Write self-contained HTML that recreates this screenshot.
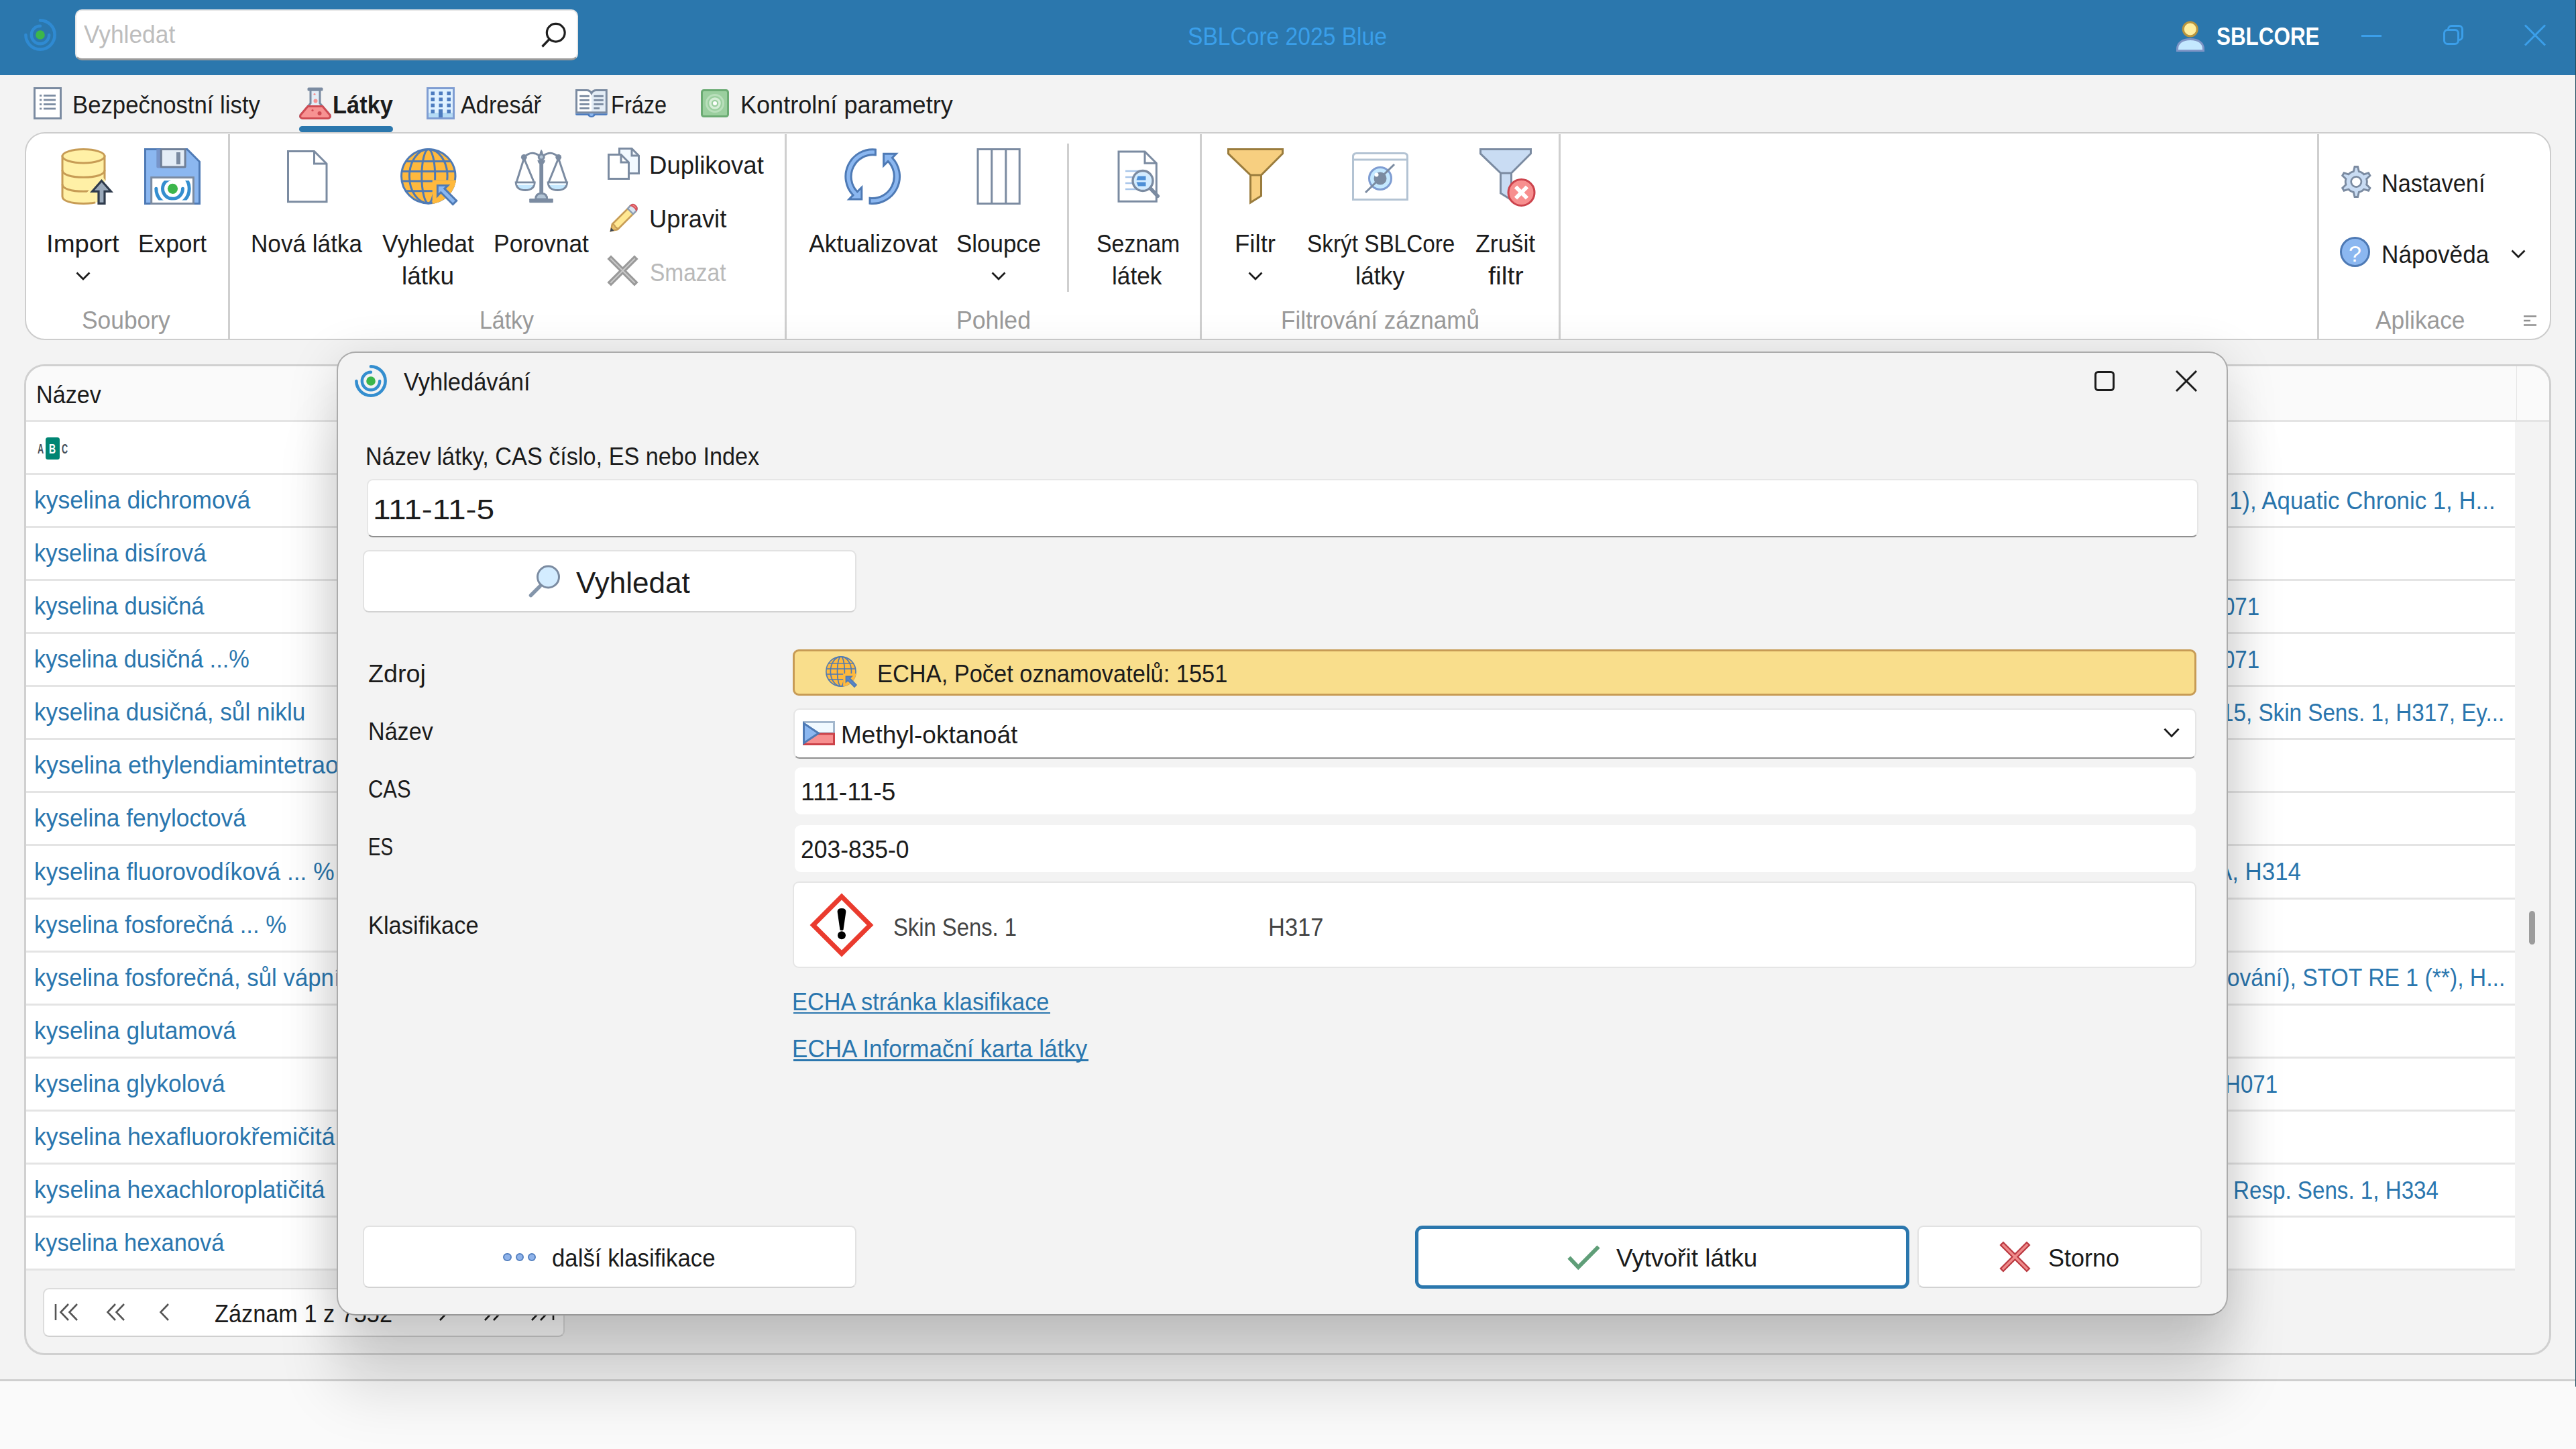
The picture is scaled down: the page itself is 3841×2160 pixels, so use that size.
<!DOCTYPE html><html lang="cs"><head><meta charset="utf-8"><title>SBLCore 2025 Blue</title><style>

html,body{margin:0;padding:0}
body{width:3841px;height:2160px;position:relative;overflow:hidden;background:#f3f3f3;font-family:"Liberation Sans", sans-serif;color:#1b1b1b}
div,svg,span{position:absolute;box-sizing:border-box}
svg{overflow:visible}
.t{white-space:nowrap;line-height:1;transform-origin:0 0}
.L{left:0;top:0;width:3841px;height:2160px}

.sep{background:#cfcfcf}
.row{background:#fff;border-bottom:3px solid #e4e4e4}
.btn{background:#fff;border:2.5px solid #e2e2e2;border-bottom-color:#d2d2d2;border-radius:9px}
.inp{background:#fff;border:2px solid #e6e6e6;border-bottom:2.6px solid #8f8f8f;border-radius:9px}
.ro{background:#fff;border-radius:9px}

</style></head><body>
<div class="L" id="bg">
<div style="left:0px;top:0px;width:3841px;height:112px;background:#2b77ad"></div>
<div style="left:0px;top:2056px;width:3841px;height:3px;background:#cfcfcf"></div>
<div style="left:0px;top:2059px;width:3841px;height:101px;background:#fafafa"></div>
<div style="left:3840px;top:0px;width:1px;height:2067px;background:#1d4a5c"></div>
<svg style="left:36px;top:27.5px" width="48" height="48" viewBox="0 0 48 48" ><path d="M24 2.4A21.6 21.6 0 1 1 2.4 24" fill="none" stroke="#2f8ad2" stroke-width="4.6" stroke-linecap="round"/><path d="M37.2 24A13.2 13.2 0 1 1 24 10.8" fill="none" stroke="#2f8ad2" stroke-width="4.4" stroke-linecap="round"/><circle cx="24" cy="24" r="6.8" fill="#3cb64b"/></svg>
<div style="left:112px;top:14px;width:750px;height:76px;background:#fff;border:2.5px solid #e6e6e6;border-bottom:3px solid #9a9a9a;border-radius:10px"></div>
<span class="t" style="left:125.00px;top:34px;font-size:36px;transform:scaleX(0.9819);color:#bdbdbd;">Vyhledat</span>
<svg style="left:800px;top:28px" width="48" height="48" viewBox="0 0 48 48" ><circle cx="28.75" cy="20.75" r="13.4" fill="none" stroke="#1f1f1f" stroke-width="3.2"/><path d="M19.3 30.3 L8.5 41.5" stroke="#1f1f1f" stroke-width="3.4" fill="none"/></svg>
<span class="t" style="left:1771.07px;top:37px;font-size:36px;transform:scaleX(0.9330);color:#3a9fea;">SBLCore 2025 Blue</span>
<svg style="left:3245px;top:30.5px" width="42" height="46" viewBox="0 0 42 46" ><path d="M1.5 44.5V42C1.5 33 9 27.5 21 27.5S40.5 33 40.5 42V44.5Z" fill="#c4e8ff" stroke="#7f95c6" stroke-width="3"/><circle cx="20.75" cy="12.5" r="10.5" fill="#ffee9f" stroke="#b8953f" stroke-width="3"/></svg>
<span class="t" style="left:3304.88px;top:37px;font-size:36px;transform:scaleX(0.8721);color:#fff;font-weight:700;">SBLCORE</span>
<div style="left:3521px;top:51.75px;width:30px;height:3px;background:#3b9fea"></div>
<svg style="left:3642px;top:36px" width="32" height="32" viewBox="0 0 32 32" ><rect x="8.5" y="2.5" width="21" height="21" rx="5" fill="none" stroke="#3b9fea" stroke-width="3"/><rect x="2.5" y="8.5" width="21" height="21" rx="5" fill="#2b77ad" stroke="#3b9fea" stroke-width="3"/></svg>
<svg style="left:3763px;top:36px" width="34" height="33" viewBox="0 0 34 33" ><path d="M2 1.5 L32 31.5 M32 1.5 L2 31.5" stroke="#3b9fea" stroke-width="3" fill="none"/></svg>
</div>
<div class="L" id="main">
<svg style="left:50px;top:130px" width="42" height="48" viewBox="0 0 42 48" ><rect x="1.5" y="1.5" width="39" height="45" fill="#fff" stroke="#7b8ba1" stroke-width="3"/><rect x="9" y="11.1" width="3.2" height="2.8" fill="#7b8ba1"/><rect x="15" y="11.1" width="18" height="2.8" fill="#7b8ba1"/><rect x="9" y="17.6" width="3.2" height="2.8" fill="#7b8ba1"/><rect x="15" y="17.6" width="18" height="2.8" fill="#7b8ba1"/><rect x="9" y="24.1" width="3.2" height="2.8" fill="#7b8ba1"/><rect x="15" y="24.1" width="18" height="2.8" fill="#7b8ba1"/><rect x="9" y="30.6" width="3.2" height="2.8" fill="#7b8ba1"/><rect x="15" y="30.6" width="18" height="2.8" fill="#7b8ba1"/></svg>
<span class="t" style="left:108.07px;top:139px;font-size:36px;transform:scaleX(0.9648);">Bezpečnostní listy</span>
<svg style="left:445.75px;top:130px" width="48" height="48" viewBox="0 0 48 48" ><path d="M17 4V24L2 41.5Q0.5 46 5.5 46.5H42.5Q47.5 46 46 41.5L31 24V4Z" fill="#e4edf6" stroke="#7b8ba1" stroke-width="3"/><path d="M13 28.5H35L46 41.5Q47.5 46 42.5 46.5H5.5Q0.5 46 2 41.5Z" fill="#f79292" stroke="#cf4a52" stroke-width="3"/><rect x="12.5" y="0.5" width="23" height="5" rx="1.5" fill="#7b8ba1"/><circle cx="23" cy="10.5" r="1.6" fill="#f79292"/><circle cx="24.5" cy="20.5" r="3" fill="#f79292"/><circle cx="20" cy="34.5" r="1.6" fill="#cf4a52"/><circle cx="30.5" cy="39" r="3" fill="#cf4a52"/></svg>
<span class="t" style="left:495.59px;top:139px;font-size:36px;transform:scaleX(0.9563);font-weight:700;">Látky</span>
<div style="left:446px;top:188px;width:140px;height:9px;background:#2b77ad;border-radius:5px"></div>
<svg style="left:636.25px;top:130px" width="42" height="48" viewBox="0 0 42 48" ><rect x="1.5" y="1.5" width="39" height="45" fill="#dff1ff" stroke="#7f9dd2" stroke-width="3"/><rect x="3" y="38" width="36" height="7" fill="#b5dbf5"/><rect x="6.5" y="6.5" width="5.5" height="5.5" fill="#4d7cbf"/><rect x="18.5" y="6.5" width="5.5" height="5.5" fill="#4d7cbf"/><rect x="30.5" y="6.5" width="5.5" height="5.5" fill="#4d7cbf"/><rect x="6.5" y="15.5" width="5.5" height="5.5" fill="#4d7cbf"/><rect x="18.5" y="15.5" width="5.5" height="5.5" fill="#4d7cbf"/><rect x="30.5" y="15.5" width="5.5" height="5.5" fill="#4d7cbf"/><rect x="6.5" y="24.5" width="5.5" height="5.5" fill="#4d7cbf"/><rect x="18.5" y="24.5" width="5.5" height="5.5" fill="#4d7cbf"/><rect x="30.5" y="24.5" width="5.5" height="5.5" fill="#4d7cbf"/><rect x="6.5" y="33.5" width="5.5" height="5.5" fill="#4d7cbf"/><rect x="18.5" y="33.5" width="5.5" height="5.5" fill="#4d7cbf"/><rect x="30.5" y="33.5" width="5.5" height="5.5" fill="#4d7cbf"/><rect x="18" y="33" width="6" height="12" fill="#4d7cbf"/></svg>
<span class="t" style="left:687.00px;top:139px;font-size:36px;transform:scaleX(0.9523);">Adresář</span>
<svg style="left:858px;top:133px" width="48" height="42" viewBox="0 0 48 42" ><path d="M1.5 1.5H17Q21.5 1.5 23.9 6Q26.3 1.5 31 1.5H46.3V34.8H1.5Z" fill="#fff" stroke="none"/><path d="M23.9 6Q26.3 1.5 31 1.5H46.3V34.8H23.9Z" fill="#e4edf6"/><path d="M1.5 1.5H17Q21.5 1.5 23.9 6Q26.3 1.5 31 1.5H46.3V34.8H1.5Z" fill="none" stroke="#7b8ba1" stroke-width="3"/><path d="M0 36.3H47.8V37Q47.8 39 45.8 39H29.5Q27.5 42 23.9 42T18.3 39H2Q0 39 0 37Z" fill="#4d7cbf"/><path d="M20.9 36.3H26.9Q26.9 40 23.9 40T20.9 36.3Z" fill="#8bb7f0"/><rect x="6.2" y="8.850000000000001" width="14.6" height="2.9" fill="#7b8ba1"/><rect x="27.4" y="8.850000000000001" width="14.4" height="2.9" fill="#7b8ba1"/><rect x="6.2" y="14.95" width="14.6" height="2.9" fill="#7b8ba1"/><rect x="27.4" y="14.95" width="14.4" height="2.9" fill="#7b8ba1"/><rect x="6.2" y="20.95" width="14.6" height="2.9" fill="#7b8ba1"/><rect x="27.4" y="20.95" width="14.4" height="2.9" fill="#7b8ba1"/><rect x="6.2" y="27.05" width="14.6" height="2.9" fill="#7b8ba1"/><rect x="27.4" y="27.05" width="8.6" height="2.9" fill="#7b8ba1"/></svg>
<span class="t" style="left:910.69px;top:139px;font-size:36px;transform:scaleX(0.9045);">Fráze</span>
<svg style="left:1045px;top:133px" width="42" height="42" viewBox="0 0 42 42" ><rect x="1.5" y="1.5" width="39" height="39" rx="3" fill="#9bcf9f" stroke="#6bab73" stroke-width="3"/><circle cx="21" cy="21" r="12.5" fill="none" stroke="#b9dfbb" stroke-width="3"/><circle cx="21" cy="21" r="7" fill="none" stroke="#d5edd6" stroke-width="3.5"/><circle cx="21" cy="21" r="3" fill="#fff"/></svg>
<span class="t" style="left:1104.25px;top:139px;font-size:36px;transform:scaleX(1.0019);">Kontrolní parametry</span>
<div style="left:36.5px;top:197px;width:3767px;height:310px;background:#fff;border:2.6px solid #cdcdcd;border-radius:30px"></div>
<div class="sep" style="left:339.5px;top:200px;width:3px;height:304.5px;"></div>
<div class="sep" style="left:1170px;top:200px;width:3px;height:304.5px;"></div>
<div class="sep" style="left:1789px;top:200px;width:3px;height:304.5px;"></div>
<div class="sep" style="left:2324px;top:200px;width:3px;height:304.5px;"></div>
<div class="sep" style="left:3455px;top:200px;width:3px;height:304.5px;"></div>
<div class="sep" style="left:1590.75px;top:213.75px;width:3px;height:220.75px;"></div>
<svg style="left:90.5px;top:221px" width="88" height="86" viewBox="0 0 88 86" ><defs><clipPath id="cylc"><path d="M2 11.8V72C2 78.5 15 82.5 33.5 82.5S65 78.5 65 72V11.8Z"/><ellipse cx="33.5" cy="11.8" rx="31.5" ry="10.2"/></clipPath></defs><path d="M2 11.8V72C2 78.5 15 82.5 33.5 82.5S65 78.5 65 72V11.8Z" fill="#fff0a6" stroke="#c79c55" stroke-width="3"/><ellipse cx="33.5" cy="11.8" rx="31.5" ry="10.2" fill="#fff0a6" stroke="#c79c55" stroke-width="3"/><path d="M2 32.8C2 39.3 15 43.3 33.5 43.3S65 39.3 65 32.8M2 53.8C2 60.3 15 64.3 33.5 64.3S65 60.3 65 53.8" fill="none" stroke="#c79c55" stroke-width="3"/><path d="M60.5 48.5L74.5 64.3H65V82.3H56V64.3H46.5Z" fill="#fff" stroke="#fff" stroke-width="9"/><path d="M60.5 48.5L74.5 64.3H65V82.3H56V64.3H46.5Z" fill="#fff0a6" stroke="#fff0a6" stroke-width="9.5" clip-path="url(#cylc)"/><path d="M60.5 48.5L74.5 64.3H65V82.3H56V64.3H46.5Z" fill="#9aa9ba" stroke="#2f3b4c" stroke-width="3.2"/></svg>
<span class="t" style="left:68.80px;top:346px;font-size:36px;transform:scaleX(1.0654);">Import</span>
<svg style="left:113.2px;top:404.5px" width="22" height="14" viewBox="0 0 22 14" ><path d="M1.5 1.5 L11 11 L20.5 1.5" fill="none" stroke="#1b1b1b" stroke-width="2.8"/></svg>
<svg style="left:215px;top:221px" width="84" height="84" viewBox="0 0 84 84" ><defs><clipPath id="flc"><rect x="12" y="48.2" width="60" height="29.3"/></clipPath></defs><path d="M1.5 1.5H64L82.5 20V82.5H1.5Z" fill="#8bb7f0" stroke="#4e7ab5" stroke-width="3"/><path d="M18.3 1.5H25V29.5H21Q18.3 29.5 18.3 27Z" fill="#7794c9"/><rect x="25.3" y="1.5" width="35.8" height="26.5" rx="1" fill="#e4edf6" stroke="#6f7f97" stroke-width="3"/><rect x="48" y="6" width="6" height="18" fill="#7b8ba1"/><rect x="10.7" y="43.6" width="62.7" height="38.9" fill="#fff" stroke="#7b8ba1" stroke-width="3"/><g clip-path="url(#flc)"><path d="M42.5 35.6A24.7 24.7 0 1 1 17.8 60.3" fill="none" stroke="#348ecf" stroke-width="5" stroke-linecap="round"/><path d="M57.5 60.3A15 15 0 1 1 42.5 45.3" fill="none" stroke="#348ecf" stroke-width="5" stroke-linecap="round"/></g><circle cx="42.5" cy="60.3" r="7.6" fill="#3cb64b"/></svg>
<span class="t" style="left:205.54px;top:346px;font-size:36px;transform:scaleX(0.9800);">Export</span>
<span class="t" style="left:122.02px;top:460px;font-size:36px;transform:scaleX(0.9824);color:#9a9a9a;">Soubory</span>
<svg style="left:427.5px;top:223.75px" width="61" height="79" viewBox="0 0 61 79" ><path d="M1.5 1.5H40.5L59 20V76.8H1.5Z" fill="#fff" stroke="#7b8ba1" stroke-width="3"/><path d="M40.5 1.5V20H59" fill="none" stroke="#7b8ba1" stroke-width="3"/></svg>
<span class="t" style="left:373.55px;top:346px;font-size:36px;transform:scaleX(0.9760);">Nová látka</span>
<svg style="left:597px;top:221px" width="86.5" height="86.5" viewBox="0 0 87 87" ><defs><clipPath id="gc597"><circle cx="42" cy="42" r="42"/></clipPath></defs><circle cx="42" cy="42" r="40.5" fill="#ffb93d" stroke="#4e7ab5" stroke-width="3"/><ellipse cx="42" cy="42" rx="10" ry="40.5" fill="none" stroke="#4e7ab5" stroke-width="3"/><ellipse cx="42" cy="42" rx="28.5" ry="40.5" fill="none" stroke="#4e7ab5" stroke-width="3"/><path d="M8 19.7H76M2.5 34.8H81.5M2.5 49.4H81.5M8 64.2H76" fill="none" stroke="#4e7ab5" stroke-width="3"/><rect x="48" y="47.7" width="40" height="40" fill="#ffb93d" clip-path="url(#gc597)"/><path d="M55.7 55.7H71.2L66.2 60.7L84.2 78.7L78.7 84.2L60.7 66.2L55.7 71.2Z" fill="#8bb7f0" stroke="#4e7ab5" stroke-width="3" stroke-linejoin="miter"/></svg>
<span class="t" style="left:570.00px;top:346px;font-size:36px;transform:scaleX(0.9873);">Vyhledat</span>
<span class="t" style="left:598.95px;top:394px;font-size:36px;transform:scaleX(1.0275);">látku</span>
<svg style="left:768px;top:221px" width="79" height="82" viewBox="0 0 79 82" ><path d="M13.3 13.3Q24 2.5 36 10.8M42.4 10.8Q54.4 2.5 64.7 13.3" fill="none" stroke="#7b8ba1" stroke-width="3"/><path d="M39.2 2.5Q43.2 8.5 39.2 11Q35.2 8.5 39.2 2.5Z" fill="#7b8ba1" stroke="#7b8ba1" stroke-width="1"/><circle cx="39.2" cy="13.1" r="4" fill="#b3c5d6" stroke="#7b8ba1" stroke-width="3"/><circle cx="13.3" cy="13.3" r="4.4" fill="#7b8ba1"/><circle cx="64.7" cy="13.3" r="4.4" fill="#7b8ba1"/><path d="M33.3 17.8H45.1Q44.5 22 42.1 23.5V68H36.3V23.5Q33.9 22 33.3 17.8Z" fill="#7b8ba1"/><path d="M13.3 15L2 51M13.3 15L28.4 51M64.7 15L50 51M64.7 15L76.8 51" fill="none" stroke="#7b8ba1" stroke-width="3"/><path d="M1.2 51H29.2Q28.5 62.5 15.2 62.5T1.2 51ZM49.2 51H77.6Q76.9 62.5 63.4 62.5T49.2 51Z" fill="#c4e8ff" stroke="#7b8ba1" stroke-width="3"/><path d="M2.8 53.5H27.6M50.8 53.5H76" stroke="#fff" stroke-width="2" fill="none"/><path d="M30.7 76Q30.7 67.2 39.2 67.2T47.7 76Z" fill="#b3c5d6" stroke="#7b8ba1" stroke-width="3"/><rect x="21.2" y="75.1" width="35.6" height="6.1" rx="1.2" fill="#7b8ba1"/></svg>
<span class="t" style="left:735.53px;top:346px;font-size:36px;transform:scaleX(0.9853);">Porovnat</span>
<svg style="left:906px;top:220px" width="48" height="48" viewBox="0 0 48 48" ><path d="M17.5 1.5H36L46.5 12V38.5H17.5Z" fill="#f2f9ff" stroke="#7b8ba1" stroke-width="3"/><path d="M36 1.5V12H46.5" fill="none" stroke="#7b8ba1" stroke-width="3"/><path d="M1.5 10.5H20L31.5 22V46.5H1.5Z" fill="#fff" stroke="#7b8ba1" stroke-width="3"/><path d="M20 10.5V22H31.5" fill="none" stroke="#7b8ba1" stroke-width="3"/></svg>
<span class="t" style="left:967.97px;top:229px;font-size:36px;transform:scaleX(1.0161);">Duplikovat</span>
<svg style="left:908.75px;top:303px" width="43" height="43" viewBox="0 0 43 43" ><path d="M30 5L38 13L12 39L2 41L4 31Z" fill="#ffe893" stroke="#c79c55" stroke-width="2.6"/><path d="M27 8L35 16L40 11Q42 6 38 3.5Q35 0.5 31 3.5Z" fill="#d9e4f0" stroke="#8b9bb1" stroke-width="2.4"/><path d="M31.5 3.2Q35 0.3 38.3 3.4Q42 6.5 39.8 10.5Q38 6 31.5 3.2Z" fill="#f78f8f" stroke="#d8525a" stroke-width="2"/><path d="M4 31Q8 32 8.5 35.5Q11 36 12 39L2 41Z" fill="#e8c06b" stroke="#c79c55" stroke-width="2"/><path d="M0.5 42.5L2.2 36.5L6.5 40.8Z" fill="#3a4656"/></svg>
<span class="t" style="left:968.48px;top:309px;font-size:36px;transform:scaleX(1.0109);">Upravit</span>
<svg style="left:906px;top:380.5px" width="45" height="45" viewBox="0 0 45 45" ><path d="M5 1.5L22.5 19L40 1.5L43.5 5L26 22.5L43.5 40L40 43.5L22.5 26L5 43.5L1.5 40L19 22.5L1.5 5Z" fill="#c9c9c9" stroke="#9a9a9a" stroke-width="3"/></svg>
<span class="t" style="left:969.07px;top:389px;font-size:36px;transform:scaleX(0.9294);color:#b9b9b9;">Smazat</span>
<span class="t" style="left:715.12px;top:460px;font-size:36px;transform:scaleX(0.9400);color:#9a9a9a;">Látky</span>
<svg style="left:1258.75px;top:221px" width="85" height="85" viewBox="0 0 85 85" ><path d="M46.4 2A40.3 40.3 0 0 0 13 69.9L7.1 76H25.8V58.3L19.3 64.8A32.5 32.5 0 0 1 46.4 9.9Z" fill="#8bb7f0" stroke="#4e7ab5" stroke-width="3" stroke-linejoin="miter"/><path d="M46.4 2A40.3 40.3 0 0 0 13 69.9L7.1 76H25.8V58.3L19.3 64.8A32.5 32.5 0 0 1 46.4 9.9Z" fill="#8bb7f0" stroke="#4e7ab5" stroke-width="3" stroke-linejoin="miter" transform="rotate(180 42.2 42.1)"/></svg>
<span class="t" style="left:1205.50px;top:346px;font-size:36px;transform:scaleX(0.9892);">Aktualizovat</span>
<svg style="left:1455.75px;top:221px" width="67" height="84" viewBox="0 0 67 84" ><rect x="2" y="1.5" width="62.2" height="81" fill="#fff" stroke="#7b8ba1" stroke-width="3"/><path d="M22.7 1.5V82.5M43.8 1.5V82.5" stroke="#7b8ba1" stroke-width="3" fill="none"/></svg>
<span class="t" style="left:1426.03px;top:346px;font-size:36px;transform:scaleX(0.9701);">Sloupce</span>
<svg style="left:1477.9px;top:404.5px" width="22" height="14" viewBox="0 0 22 14" ><path d="M1.5 1.5 L11 11 L20.5 1.5" fill="none" stroke="#1b1b1b" stroke-width="2.8"/></svg>
<svg style="left:1665.75px;top:223.75px" width="66" height="80" viewBox="0 0 66 80" ><path d="M2 2H41L58.3 19.3V76.3H2Z" fill="#fff" stroke="#7b8ba1" stroke-width="3"/><path d="M41 2V19.3H58.3" fill="none" stroke="#7b8ba1" stroke-width="3"/><path d="M12 31H36M12 40H30M12 49H30M12 58H36" stroke="#a9c6ea" stroke-width="2.6" fill="none"/><circle cx="38" cy="45.5" r="15" fill="#d3ecff" stroke="#7b8ba1" stroke-width="3.4"/><path d="M30.5 38.5H42.5V44.5H28.5ZM28.5 47.5H42.5V53.5H31Z" fill="#4d8fd6"/><path d="M49.5 57L60.3 68.3" stroke="#7b8ba1" stroke-width="5.5" stroke-linecap="round" fill="none"/></svg>
<span class="t" style="left:1634.56px;top:346px;font-size:36px;transform:scaleX(0.9413);">Seznam</span>
<span class="t" style="left:1657.54px;top:394px;font-size:36px;transform:scaleX(0.9794);">látek</span>
<span class="t" style="left:1425.52px;top:460px;font-size:36px;transform:scaleX(0.9901);color:#9a9a9a;">Pohled</span>
<svg style="left:1830px;top:221px" width="86" height="86" viewBox="0 0 86 86" ><path d="M1.5 1.5H82.5V8L50.5 40V71L34.5 81V40L1.5 8Z" fill="#f7cf80" stroke="#9a7c3d" stroke-width="3"/><path d="M34.5 40H50.5" stroke="#9a7c3d" stroke-width="3" fill="none"/></svg>
<span class="t" style="left:1840.97px;top:346px;font-size:36px;transform:scaleX(1.0174);">Filtr</span>
<svg style="left:1861.2px;top:404.5px" width="22" height="14" viewBox="0 0 22 14" ><path d="M1.5 1.5 L11 11 L20.5 1.5" fill="none" stroke="#1b1b1b" stroke-width="2.8"/></svg>
<svg style="left:2016.25px;top:227px" width="84" height="73" viewBox="0 0 84 73" ><path d="M1.5 70.5V6.5Q1.5 1.5 6.5 1.5H77.5Q82.5 1.5 82.5 6.5V70.5Z" fill="#fff" stroke="#b3c3d3" stroke-width="3"/><path d="M1.5 11H82.5" stroke="#b3c3d3" stroke-width="3" fill="none"/><circle cx="42" cy="39" r="16.5" fill="#c4e8ff" stroke="#7f9dd2" stroke-width="3"/><circle cx="42" cy="39" r="9.5" fill="#7b8ba1"/><circle cx="36.5" cy="33.5" r="3" fill="#fff"/><path d="M20 60L63 18" stroke="#7b8ba1" stroke-width="3" fill="none"/></svg>
<span class="t" style="left:1948.57px;top:346px;font-size:36px;transform:scaleX(0.9256);">Skrýt SBLCore</span>
<span class="t" style="left:2020.52px;top:394px;font-size:36px;transform:scaleX(0.9893);">látky</span>
<svg style="left:2205.75px;top:221px" width="86" height="88" viewBox="0 0 86 88" ><path d="M1.5 1.5H76.5V8L47.5 37V77L31.5 67V37L1.5 8Z" fill="#c9dcf3" stroke="#7b8ba1" stroke-width="3"/><path d="M31.5 37H47.5" stroke="#7b8ba1" stroke-width="3" fill="none"/><circle cx="62.5" cy="66" r="19.5" fill="#f78f8f" stroke="#cc434c" stroke-width="3"/><path d="M54 57.5L71 74.5M71 57.5L54 74.5" stroke="#fff" stroke-width="6" fill="none"/></svg>
<span class="t" style="left:2199.51px;top:346px;font-size:36px;transform:scaleX(0.9916);">Zrušit</span>
<span class="t" style="left:2219.25px;top:394px;font-size:36px;transform:scaleX(1.0990);">filtr</span>
<span class="t" style="left:1909.80px;top:460px;font-size:36px;transform:scaleX(0.9730);color:#9a9a9a;">Filtrování záznamů</span>
<svg style="left:3490px;top:247px" width="47" height="48" viewBox="0 0 47 48" ><path d="M21.0 1.5L25.6 1.5L27.3 8.5L28.9 9.0L30.5 9.7L32.0 10.6L33.5 11.6L34.7 12.8L41.6 10.8L43.9 14.7L38.7 19.7L39.1 21.4L39.3 23.1L39.3 24.9L39.1 26.6L38.7 28.3L43.9 33.3L41.6 37.2L34.7 35.2L33.5 36.4L32.0 37.4L30.5 38.3L28.9 39.0L27.3 39.5L25.6 46.5L21.0 46.5L19.3 39.5L17.7 39.0L16.1 38.3L14.6 37.4L13.1 36.4L11.9 35.2L5.0 37.2L2.7 33.3L7.9 28.3L7.5 26.6L7.3 24.9L7.3 23.1L7.5 21.4L7.9 19.7L2.7 14.7L5.0 10.8L11.9 12.8L13.1 11.6L14.6 10.6L16.1 9.7L17.7 9.0L19.3 8.5Z" fill="#c9dcf3" stroke="#7b8ba1" stroke-width="2.9" stroke-linejoin="miter"/><circle cx="23.3" cy="24" r="7.6" fill="#fff" stroke="#7b8ba1" stroke-width="2.7"/></svg>
<span class="t" style="left:3551.34px;top:256px;font-size:36px;transform:scaleX(0.9526);">Nastavení</span>
<div style="left:3489px;top:353px;width:45px;height:45px;border-radius:50%;background:#8bb7f0;border:3px solid #4e7ab5"></div>
<span class="t" style="left:3502.00px;top:361px;font-size:34px;transform:scaleX(1.0000);color:#fff;">?</span>
<span class="t" style="left:3551.30px;top:362px;font-size:36px;transform:scaleX(0.9764);">Nápověda</span>
<svg style="left:3744px;top:372.4px" width="22" height="14" viewBox="0 0 22 14" ><path d="M1.5 1.5 L11 11 L20.5 1.5" fill="none" stroke="#1b1b1b" stroke-width="2.8"/></svg>
<span class="t" style="left:3541.50px;top:460px;font-size:36px;transform:scaleX(0.9811);color:#9a9a9a;">Aplikace</span>
<svg style="left:3762.5px;top:469.5px" width="19" height="16" viewBox="0 0 19 16" ><path d="M0 1.5H19M0 8H10M0 14.5H19" stroke="#8f8f8f" stroke-width="2.6" fill="none"/></svg>
<div style="left:36px;top:542.8px;width:3768px;height:1477.5px;background:#f3f3f3;border:3px solid #d0d0d0;border-radius:30px;overflow:hidden">
<div style="left:0px;top:0.7px;width:3762px;height:80px;background:#fafafa"></div>
<div style="left:0px;top:80.2px;width:3762px;height:3px;background:#e4e4e4"></div>
<div style="left:3712.5px;top:0.7px;width:1.5px;height:80px;background:#e4e4e4"></div>
<div style="left:0px;top:83.2px;width:3711px;height:76px;background:#fff"></div>
<div style="left:0px;top:159.2px;width:3711px;height:3px;background:#e4e4e4"></div>
<div style="left:0px;top:162.2px;width:3711px;height:76.0667px;background:#fff"></div>
<div style="left:0px;top:238.267px;width:3711px;height:3px;background:#e4e4e4"></div>
<div style="left:0px;top:241.267px;width:3711px;height:76.0667px;background:#fff"></div>
<div style="left:0px;top:317.333px;width:3711px;height:3px;background:#e4e4e4"></div>
<div style="left:0px;top:320.333px;width:3711px;height:76.0667px;background:#fff"></div>
<div style="left:0px;top:396.4px;width:3711px;height:3px;background:#e4e4e4"></div>
<div style="left:0px;top:399.4px;width:3711px;height:76.0667px;background:#fff"></div>
<div style="left:0px;top:475.467px;width:3711px;height:3px;background:#e4e4e4"></div>
<div style="left:0px;top:478.467px;width:3711px;height:76.0667px;background:#fff"></div>
<div style="left:0px;top:554.533px;width:3711px;height:3px;background:#e4e4e4"></div>
<div style="left:0px;top:557.533px;width:3711px;height:76.0667px;background:#fff"></div>
<div style="left:0px;top:633.6px;width:3711px;height:3px;background:#e4e4e4"></div>
<div style="left:0px;top:636.6px;width:3711px;height:76.0667px;background:#fff"></div>
<div style="left:0px;top:712.667px;width:3711px;height:3px;background:#e4e4e4"></div>
<div style="left:0px;top:715.667px;width:3711px;height:76.0667px;background:#fff"></div>
<div style="left:0px;top:791.733px;width:3711px;height:3px;background:#e4e4e4"></div>
<div style="left:0px;top:794.733px;width:3711px;height:76.0667px;background:#fff"></div>
<div style="left:0px;top:870.8px;width:3711px;height:3px;background:#e4e4e4"></div>
<div style="left:0px;top:873.8px;width:3711px;height:76.0667px;background:#fff"></div>
<div style="left:0px;top:949.867px;width:3711px;height:3px;background:#e4e4e4"></div>
<div style="left:0px;top:952.867px;width:3711px;height:76.0667px;background:#fff"></div>
<div style="left:0px;top:1028.93px;width:3711px;height:3px;background:#e4e4e4"></div>
<div style="left:0px;top:1031.93px;width:3711px;height:76.0667px;background:#fff"></div>
<div style="left:0px;top:1108px;width:3711px;height:3px;background:#e4e4e4"></div>
<div style="left:0px;top:1111px;width:3711px;height:76.0667px;background:#fff"></div>
<div style="left:0px;top:1187.07px;width:3711px;height:3px;background:#e4e4e4"></div>
<div style="left:0px;top:1190.07px;width:3711px;height:76.0667px;background:#fff"></div>
<div style="left:0px;top:1266.13px;width:3711px;height:3px;background:#e4e4e4"></div>
<div style="left:0px;top:1269.13px;width:3711px;height:76.0667px;background:#fff"></div>
<div style="left:0px;top:1345.2px;width:3711px;height:3px;background:#e4e4e4"></div>
<div style="left:3732px;top:812.2px;width:9px;height:50px;background:#9c9c9c;border-radius:5px"></div>
</div>
<span class="t" style="left:54.35px;top:571px;font-size:36px;transform:scaleX(0.9496);">Název</span>
<div style="left:68px;top:652px;width:21.1px;height:33px;border-radius:3.5px;background:#008573"></div>
<span class="t" style="left:56.00px;top:658px;font-size:21px;transform:scaleX(0.6067);color:#454f59;font-weight:700;">A</span>
<span class="t" style="left:73.14px;top:658px;font-size:21px;transform:scaleX(0.6643);color:#fff;font-weight:700;">B</span>
<span class="t" style="left:92.00px;top:658px;font-size:21px;transform:scaleX(0.6000);color:#454f59;font-weight:700;">C</span>
<span class="t" style="left:50.52px;top:728px;font-size:36px;transform:scaleX(0.9881);color:#2a76ae;">kyselina dichromová</span>
<span class="t" style="left:50.57px;top:807px;font-size:36px;transform:scaleX(0.9638);color:#2a76ae;">kyselina disírová</span>
<span class="t" style="left:50.58px;top:886px;font-size:36px;transform:scaleX(0.9600);color:#2a76ae;">kyselina dusičná</span>
<span class="t" style="left:50.59px;top:965px;font-size:36px;transform:scaleX(0.9542);color:#2a76ae;">kyselina dusičná ...%</span>
<span class="t" style="left:50.55px;top:1044px;font-size:36px;transform:scaleX(0.9759);color:#2a76ae;">kyselina dusičná, sůl niklu</span>
<span class="t" style="left:50.50px;top:1123px;font-size:36px;transform:scaleX(0.9995);color:#2a76ae;">kyselina ethylendiamintetraoctová</span>
<span class="t" style="left:50.54px;top:1202px;font-size:36px;transform:scaleX(0.9802);color:#2a76ae;">kyselina fenyloctová</span>
<span class="t" style="left:50.54px;top:1282px;font-size:36px;transform:scaleX(0.9812);color:#2a76ae;">kyselina fluorovodíková ... %</span>
<span class="t" style="left:50.57px;top:1361px;font-size:36px;transform:scaleX(0.9639);color:#2a76ae;">kyselina fosforečná ... %</span>
<span class="t" style="left:50.57px;top:1440px;font-size:36px;transform:scaleX(0.9669);color:#2a76ae;">kyselina fosforečná, sůl vápníku</span>
<span class="t" style="left:50.53px;top:1519px;font-size:36px;transform:scaleX(0.9825);color:#2a76ae;">kyselina glutamová</span>
<span class="t" style="left:50.54px;top:1598px;font-size:36px;transform:scaleX(0.9806);color:#2a76ae;">kyselina glykolová</span>
<span class="t" style="left:50.52px;top:1677px;font-size:36px;transform:scaleX(0.9919);color:#2a76ae;">kyselina hexafluorokřemičitá</span>
<span class="t" style="left:50.52px;top:1756px;font-size:36px;transform:scaleX(0.9894);color:#2a76ae;">kyselina hexachloroplatičitá</span>
<span class="t" style="left:50.59px;top:1835px;font-size:36px;transform:scaleX(0.9571);color:#2a76ae;">kyselina hexanová</span>
<span class="t" style="left:3324.37px;top:729px;font-size:36px;transform:scaleX(0.9669);color:#2a76ae;">1), Aquatic Chronic 1, H...</span>
<span class="t" style="left:3290.06px;top:887px;font-size:36px;transform:scaleX(0.9188);color:#2a76ae;">H071</span>
<span class="t" style="left:3290.06px;top:966px;font-size:36px;transform:scaleX(0.9188);color:#2a76ae;">H071</span>
<span class="t" style="left:3312.21px;top:1045px;font-size:36px;transform:scaleX(0.9226);color:#2a76ae;">15, Skin Sens. 1, H317, Ey...</span>
<span class="t" style="left:3304.95px;top:1282px;font-size:36px;transform:scaleX(0.9682);color:#2a76ae;">A, H314</span>
<span class="t" style="left:3302.32px;top:1440px;font-size:36px;transform:scaleX(0.9362);color:#2a76ae;">nování), STOT RE 1 (**), H...</span>
<span class="t" style="left:3316.86px;top:1599px;font-size:36px;transform:scaleX(0.9188);color:#2a76ae;">H071</span>
<span class="t" style="left:3330.46px;top:1757px;font-size:36px;transform:scaleX(0.9211);color:#2a76ae;">Resp. Sens. 1, H334</span>
<div class="btn" style="left:63.5px;top:1919.5px;width:778px;height:73.5px;border-color:#dcdcdc;border-bottom-color:#cfcfcf"></div>
<svg style="left:80px;top:1942px" width="40" height="28" viewBox="0 0 40 28" ><path d="M3 2V26M22 2L10.5 14L22 26M35 2L23.5 14L35 26" fill="none" stroke="#555" stroke-width="2.6"/></svg>
<svg style="left:158px;top:1942px" width="32" height="28" viewBox="0 0 32 28" ><path d="M14 2L2.5 14L14 26M27 2L15.5 14L27 26" fill="none" stroke="#555" stroke-width="2.6"/></svg>
<svg style="left:235px;top:1942px" width="20" height="28" viewBox="0 0 20 28" ><path d="M16 2L4.5 14L16 26" fill="none" stroke="#555" stroke-width="2.6"/></svg>
<span class="t" style="left:320.25px;top:1941px;font-size:36px;transform:scaleX(0.9528);">Záznam 1 z 7552</span>
<svg style="left:652px;top:1942px" width="20" height="28" viewBox="0 0 20 28" ><path d="M4 2L15.5 14L4 26" fill="none" stroke="#1b1b1b" stroke-width="2.6"/></svg>
<svg style="left:719px;top:1942px" width="32" height="28" viewBox="0 0 32 28" ><path d="M4 2L15.5 14L4 26M17 2L28.5 14L17 26" fill="none" stroke="#1b1b1b" stroke-width="2.6"/></svg>
<svg style="left:789px;top:1942px" width="40" height="28" viewBox="0 0 40 28" ><path d="M4 2L15.5 14L4 26M17 2L28.5 14L17 26M36 2V26" fill="none" stroke="#1b1b1b" stroke-width="2.6"/></svg>
</div>
<div class="L" id="dialog">
<div style="left:502.2px;top:524px;width:2820px;height:1437px;background:#f3f3f3;border:2.8px solid #ababab;border-bottom-color:#989898;border-radius:28px;box-shadow:0 15px 74px rgba(0,0,0,.144),0 110px 90px rgba(0,0,0,.135)"></div>
<svg style="left:529px;top:544px" width="48" height="48" viewBox="0 0 48 48" ><path d="M24 2.4A21.6 21.6 0 1 1 2.4 24" fill="none" stroke="#348ecf" stroke-width="4.6" stroke-linecap="round"/><path d="M37.2 24A13.2 13.2 0 1 1 24 10.8" fill="none" stroke="#348ecf" stroke-width="4.4" stroke-linecap="round"/><circle cx="24" cy="24" r="6.8" fill="#3cb64b"/></svg>
<span class="t" style="left:601.50px;top:552px;font-size:36px;transform:scaleX(0.9578);">Vyhledávání</span>
<svg style="left:3122px;top:552px" width="32" height="32" viewBox="0 0 32 32" ><rect x="2.5" y="2.5" width="27" height="27" rx="4" fill="none" stroke="#1b1b1b" stroke-width="3"/></svg>
<svg style="left:3243px;top:551px" width="34" height="34" viewBox="0 0 34 34" ><path d="M2 2L32 32M32 2L2 32" stroke="#1b1b1b" stroke-width="3" fill="none"/></svg>
<span class="t" style="left:545.30px;top:663px;font-size:36px;transform:scaleX(0.9507);">Název látky, CAS číslo, ES nebo Index</span>
<div class="inp" style="left:546.5px;top:714px;width:2731px;height:86.5px;"></div>
<span class="t" style="left:556.06px;top:738px;font-size:43px;transform:scaleX(1.1145);">111-11-5</span>
<div class="btn" style="left:541.3px;top:820px;width:735.7px;height:92.5px;"></div>
<svg style="left:787px;top:841.5px" width="50" height="50" viewBox="0 0 50 50" ><path d="M18 32L4.5 45.5" stroke="#8495aa" stroke-width="5.5" stroke-linecap="round" fill="none"/><circle cx="30.5" cy="18" r="16" fill="#d3ecff" stroke="#7b8ba1" stroke-width="3"/></svg>
<span class="t" style="left:859.40px;top:847px;font-size:44px;transform:scaleX(1.0013);">Vyhledat</span>
<span class="t" style="left:548.95px;top:987px;font-size:36px;transform:scaleX(1.0466);">Zdroj</span>
<div style="left:1182px;top:968px;width:2093px;height:68.5px;background:#f9de8c;border:3px solid #c79b55;border-radius:9px"></div>
<svg style="left:1230.5px;top:978.25px" width="47.5" height="47.5" viewBox="0 0 87 87" ><defs><clipPath id="gc1230"><circle cx="42" cy="42" r="42"/></clipPath></defs><circle cx="42" cy="42" r="40.5" fill="#ffb93d" stroke="#4e7ab5" stroke-width="3"/><ellipse cx="42" cy="42" rx="10" ry="40.5" fill="none" stroke="#4e7ab5" stroke-width="3"/><ellipse cx="42" cy="42" rx="28.5" ry="40.5" fill="none" stroke="#4e7ab5" stroke-width="3"/><path d="M8 19.7H76M2.5 34.8H81.5M2.5 49.4H81.5M8 64.2H76" fill="none" stroke="#4e7ab5" stroke-width="3"/><rect x="48" y="47.7" width="40" height="40" fill="#ffb93d" clip-path="url(#gc1230)"/><path d="M55.7 55.7H71.2L66.2 60.7L84.2 78.7L78.7 84.2L60.7 66.2L55.7 71.2Z" fill="#5785c7" stroke="#4e7ab5" stroke-width="3" stroke-linejoin="miter"/></svg>
<span class="t" style="left:1307.59px;top:987px;font-size:36px;transform:scaleX(0.9562);">ECHA, Počet oznamovatelů: 1551</span>
<span class="t" style="left:548.60px;top:1073px;font-size:36px;transform:scaleX(0.9476);">Název</span>
<div class="inp" style="left:1182.5px;top:1055.5px;width:2092.5px;height:75px;"></div>
<svg style="left:1197px;top:1075px" width="48" height="36" viewBox="0 0 48 36" ><rect x="1.5" y="1.5" width="45" height="16.5" fill="#f0f9ff" stroke="#a3b7cd" stroke-width="3"/><rect x="1.5" y="19" width="45" height="15.5" fill="#f78f8f" stroke="#cc4249" stroke-width="3"/><path d="M1.5 3.2L23.5 18L1.5 32.8Z" fill="#8bb7f0" stroke="#4e7ab5" stroke-width="3" stroke-linejoin="miter"/></svg>
<span class="t" style="left:1253.69px;top:1078px;font-size:36px;transform:scaleX(1.0280);">Methyl-oktanoát</span>
<svg style="left:3226px;top:1085px" width="24" height="16" viewBox="0 0 24 16" ><path d="M1.5 1.5 L12 12.5 L22.5 1.5" fill="none" stroke="#1b1b1b" stroke-width="2.8"/></svg>
<span class="t" style="left:549.14px;top:1159px;font-size:36px;transform:scaleX(0.8582);">CAS</span>
<div class="ro" style="left:1184.5px;top:1143.75px;width:2089px;height:70.5px;"></div>
<span class="t" style="left:1194.17px;top:1163px;font-size:36px;transform:scaleX(1.0389);">111-11-5</span>
<span class="t" style="left:548.95px;top:1245px;font-size:36px;transform:scaleX(0.7731);">ES</span>
<div class="ro" style="left:1184.5px;top:1229.7px;width:2089px;height:70.5px;"></div>
<span class="t" style="left:1193.82px;top:1249px;font-size:36px;transform:scaleX(0.9845);">203-835-0</span>
<span class="t" style="left:548.59px;top:1362px;font-size:36px;transform:scaleX(0.9565);">Klasifikace</span>
<div style="left:1182.4px;top:1314.2px;width:2092.6px;height:129px;background:#fff;border:2.5px solid #e5e5e5;border-radius:9px"></div>
<svg style="left:1207.3px;top:1331.2px" width="96" height="96" viewBox="0 0 96 96" ><path d="M48 5.5L90.5 48L48 90.5L5.5 48Z" fill="#fff" stroke="#ea3b2e" stroke-width="7"/><path d="M41.6 28Q41.6 23 48 23T54.4 28L50.6 54.5Q50.3 56 48 56T45.4 54.5Z" fill="#000"/><circle cx="48" cy="63.3" r="6" fill="#000"/></svg>
<span class="t" style="left:1331.99px;top:1365px;font-size:36px;transform:scaleX(0.9101);color:#444;">Skin Sens. 1</span>
<span class="t" style="left:1890.59px;top:1365px;font-size:36px;transform:scaleX(0.9574);color:#444;">H317</span>
<span class="t" style="left:1181.29px;top:1476px;font-size:36px;transform:scaleX(0.9533);color:#2a76ae;">ECHA stránka klasifikace</span>
<div style="left:1183.2px;top:1508.8px;width:382.4px;height:2.4px;background:#2a76ae"></div>
<span class="t" style="left:1181.25px;top:1546px;font-size:36px;transform:scaleX(0.9738);color:#2a76ae;">ECHA Informační karta látky</span>
<div style="left:1183.2px;top:1579.2px;width:440.3px;height:2.4px;background:#2a76ae"></div>
<div class="btn" style="left:541.3px;top:1827.3px;width:735.7px;height:93.2px;"></div>
<div style="left:750.3px;top:1867.7px;width:12.4px;height:12.4px;background:#8fb3ea;border:2.8px solid #5480c0;border-radius:50%"></div>
<div style="left:768.6px;top:1867.7px;width:12.4px;height:12.4px;background:#8fb3ea;border:2.8px solid #5480c0;border-radius:50%"></div>
<div style="left:786.7px;top:1867.7px;width:12.4px;height:12.4px;background:#8fb3ea;border:2.8px solid #5480c0;border-radius:50%"></div>
<span class="t" style="left:822.63px;top:1858px;font-size:36px;transform:scaleX(0.9661);">další klasifikace</span>
<div style="left:2110px;top:1827.3px;width:737px;height:93.8px;background:#fff;border:5.5px solid #2b77ad;border-radius:11px"></div>
<svg style="left:2334px;top:1854px" width="56" height="42" viewBox="0 0 56 42" ><path d="M5.5 20.5 L19.3 35 L49.5 4.5" fill="none" stroke="#5f9e78" stroke-width="6"/></svg>
<span class="t" style="left:2409.80px;top:1858px;font-size:36px;transform:scaleX(1.0271);">Vytvořit látku</span>
<div class="btn" style="left:2859.3px;top:1827.3px;width:424.2px;height:93.2px;"></div>
<svg style="left:2982.2px;top:1850.6px" width="45" height="45" viewBox="0 0 45 45" ><path d="M5 1L22.5 18.5L40 1L44 5L26.5 22.5L44 40L40 44L22.5 26.5L5 44L1 40L18.5 22.5L1 5Z" fill="#ef8a8a" stroke="#bb3a42" stroke-width="2.2"/></svg>
<span class="t" style="left:3053.90px;top:1858px;font-size:36px;transform:scaleX(0.9996);">Storno</span>
</div>
</body></html>
